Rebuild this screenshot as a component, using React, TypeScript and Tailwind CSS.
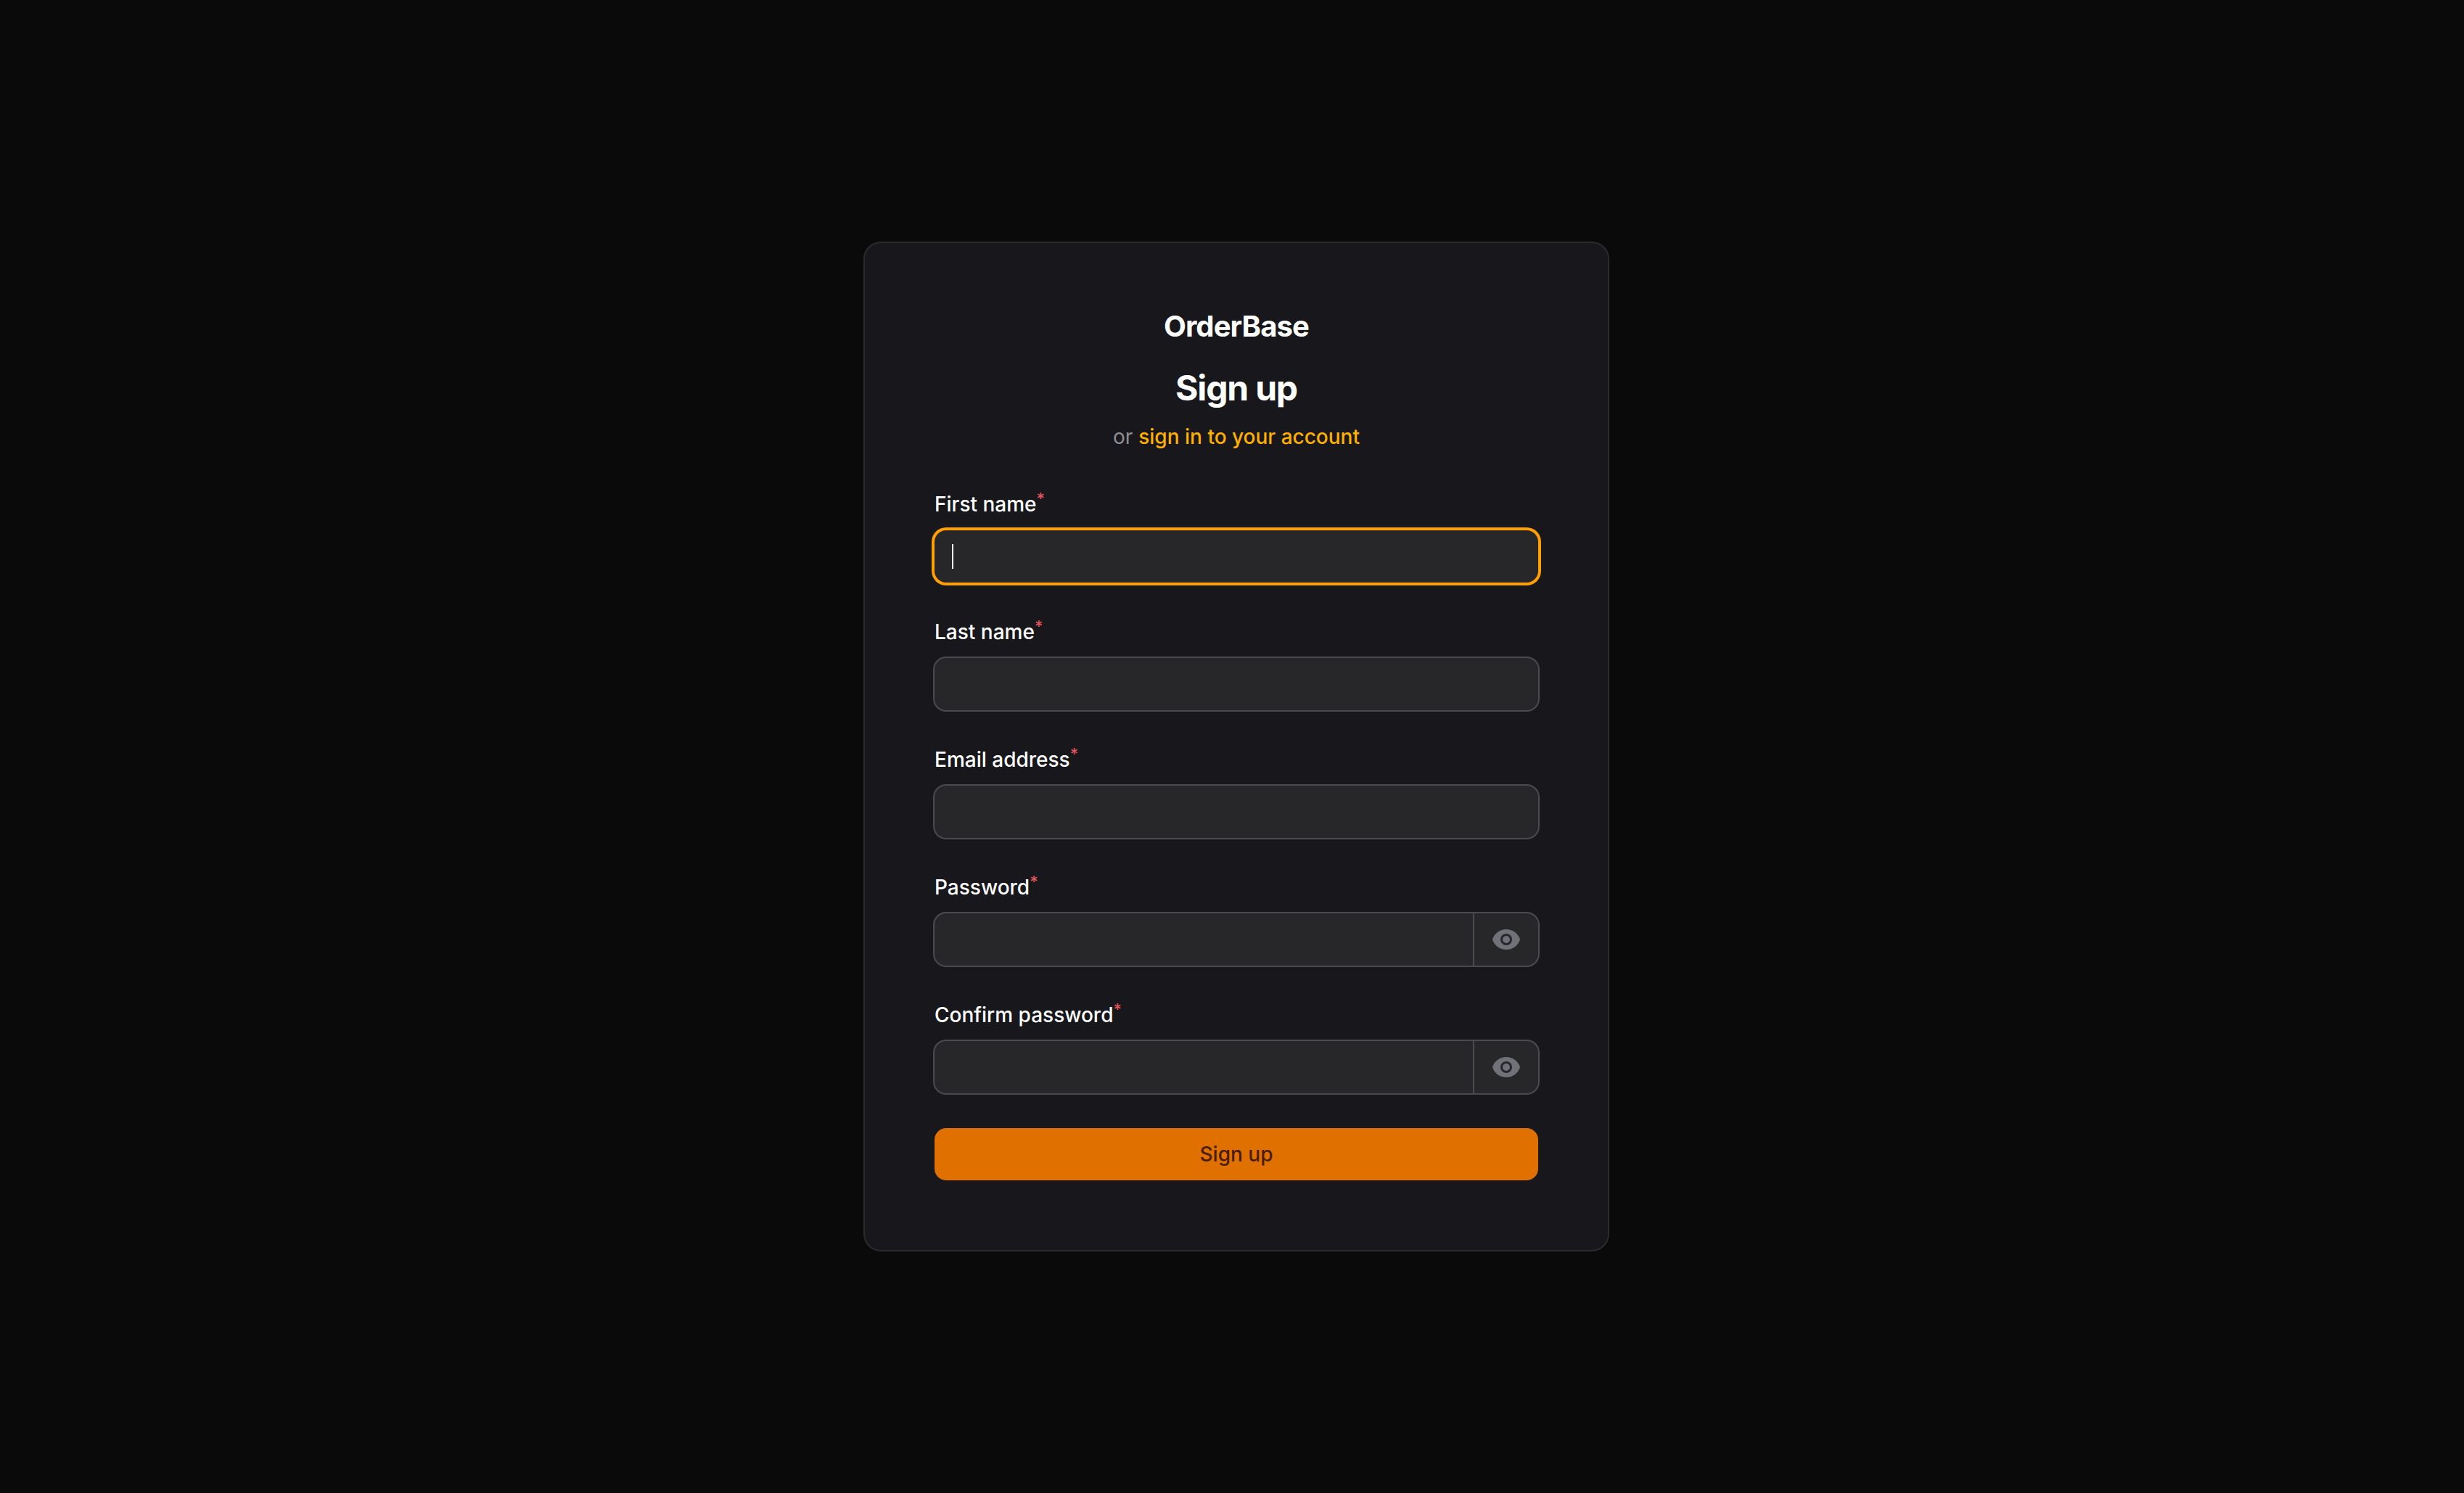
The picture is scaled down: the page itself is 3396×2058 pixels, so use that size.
import React from "react";

function Eye() {
  return (
    <svg viewBox="0 0 20 20" fill="currentColor" className="w-[40px] h-[40px] text-[#71717a]">
      <path d="M10 12.5a2.5 2.5 0 1 0 0-5 2.5 2.5 0 0 0 0 5Z" />
      <path
        fillRule="evenodd"
        clipRule="evenodd"
        d="M.664 10.59a1.651 1.651 0 0 1 0-1.186A10.004 10.004 0 0 1 10 3c4.257 0 7.893 2.66 9.336 6.41.147.381.146.804 0 1.186A10.004 10.004 0 0 1 10 17c-4.257 0-7.893-2.66-9.336-6.41ZM14 10a4 4 0 1 1-8 0 4 4 0 0 1 8 0Z"
      />
    </svg>
  );
}

function Field({ label, focused, password }: { label: string; focused?: boolean; password?: boolean }) {
  return (
    <div className="flex flex-col gap-[16px]">
      <label className="text-[28px] leading-[40px] font-medium text-white">
        {label}
        <span className="text-[#e5535b] text-[22px] leading-none align-[10px]">*</span>
      </label>
      <div
        className={
          "h-[72px] flex items-stretch rounded-[16px] bg-[#272729] " +
          (focused ? "ring-4 ring-[#ff9f00]" : "ring-2 ring-[#4b4b4f]")
        }
      >
        <div className="flex-1 flex items-center pl-[24px] min-w-0">
          {focused && <span className="w-[2px] h-[34px] bg-white shrink-0" />}
          <input
            type={password ? "password" : "text"}
            aria-label={label}
            className="flex-1 min-w-0 bg-transparent outline-none text-[28px] text-white"
          />
        </div>
        {password && (
          <button type="button" className="w-[90px] flex items-center justify-center border-l-2 border-[#4b4b4f]">
            <Eye />
          </button>
        )}
      </div>
    </div>
  );
}

export default function App() {
  return (
    <div className="min-h-screen bg-[#0a0a0a] flex items-center justify-center pl-[12px] font-['Inter',sans-serif]">
      <div className="w-[1028px] border-2 border-[#2b2b2e] rounded-[24px] bg-[#18181c] px-[96px] pt-[87px] pb-[96px]">
        <div className="flex flex-col items-center">
          <div className="text-[40px] leading-[56px] font-bold text-white tracking-[-0.9px]">OrderBase</div>
          <h1 className="mt-[25px] text-[48px] leading-[64px] font-bold text-white tracking-[-1.2px]">Sign up</h1>
          <p className="mt-[15px] text-[28px] leading-[40px] text-[#8e8e93]">
            or <a className="text-[#ffb000] font-medium">sign in to your account</a>
          </p>
        </div>
        <form className="mt-[53px] flex flex-col gap-[48px]">
          <Field label="First name" focused />
          <Field label="Last name" />
          <Field label="Email address" />
          <Field label="Password" password />
          <Field label="Confirm password" password />
          <button
            type="button"
            className="h-[72px] rounded-[16px] bg-[#e07000] text-[28px] font-medium text-[#4a1d00]"
          >
            Sign up
          </button>
        </form>
      </div>
    </div>
  );
}
